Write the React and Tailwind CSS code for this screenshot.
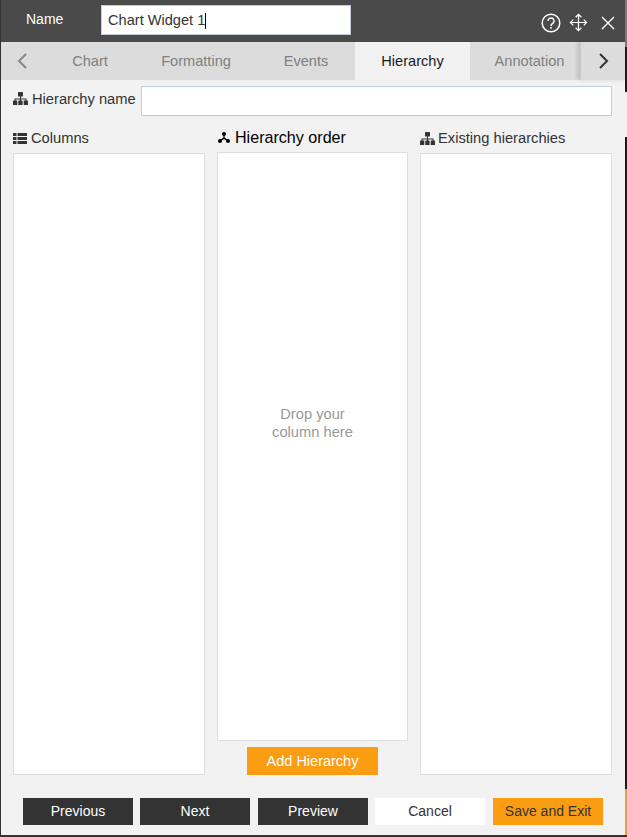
const font = "font-['Liberation_Sans',Arial,sans-serif]";

function HierarchyIcon({ className }) {
  return (
    <svg viewBox="0 0 15 13" className={className} fill="currentColor">
      <rect x="5" y="0" width="5" height="4.500" rx="0.6" />
      <path d="M7 4h1v2.500h5.500V9h-1V7.500H8V9H7V7.500H2.500V9h-1V6.500H7z" />
      <rect x="0" y="8.500" width="4.300" height="4.500" rx="0.6" />
      <rect x="5.300" y="8.500" width="4.300" height="4.500" rx="0.6" />
      <rect x="10.700" y="8.500" width="4.300" height="4.500" rx="0.6" />
    </svg>
  );
}

function ColumnsIcon({ className }) {
  return (
    <svg viewBox="0 0 14 11" className={className} fill="currentColor">
      <rect x="0" y="0" width="3.500" height="3" />
      <rect x="4.500" y="0" width="9.500" height="3" />
      <rect x="0" y="4" width="3.500" height="3" />
      <rect x="4.500" y="4" width="9.500" height="3" />
      <rect x="0" y="8" width="3.500" height="3" />
      <rect x="4.500" y="8" width="9.500" height="3" />
    </svg>
  );
}

function OrderIcon({ className }) {
  return (
    <svg viewBox="0 0 12 11" className={className} fill="currentColor">
      <circle cx="6" cy="2" r="2" />
      <circle cx="2" cy="9" r="2" />
      <circle cx="10" cy="9" r="2" />
      <path d="M5.400 3h1.200v2.600l3.600 3-.8.900L6 7 2.600 9.500l-.8-.9 3.600-3z" />
    </svg>
  );
}

function TabButton({ label, active, className }) {
  return (
    <div className={`${className} flex items-center justify-center h-full pt-px text-[14.6px] ${active ? "bg-[#f2f2f2] text-[#1a1a1a]" : "text-[#808080]"}`}>
      {label}
    </div>
  );
}

function FooterButton({ label, tone, width }) {
  const tones = {
    dark: "bg-[#333333] text-white",
    light: "bg-white text-[#333333]",
    orange: "bg-[#fb9d13] text-[#333333]",
  };
  return <button className={`${width} h-[27px] pb-[2px] text-sm ${tones[tone]}`}>{label}</button>;
}

export default function App() {
  return (
    <div className={`${font} w-[627px] h-[837px] flex flex-col bg-[#f2f2f2] border-l border-b-2 border-[#333333] relative overflow-hidden`}>
      <div className="h-[42px] shrink-0 bg-[#4a4a4a] flex items-center">
        <span className="w-[100px] pl-[25px] text-sm text-white -mt-[4px]">Name</span>
        <div className="w-[250px] h-[30px] -mt-[2px] pt-px bg-white border border-[#c3cbdc] flex items-center pl-[6px] text-[14.6px] text-[#333333]">
          Chart Widget 1<span className="w-px h-[16px] bg-black" />
        </div>
        <div className="ml-auto flex items-center text-white mt-[3px]">
          <svg viewBox="0 0 20 20" className="w-[20px] h-[20px] mr-[8px]" fill="none" stroke="currentColor" strokeWidth="1.5">
            <circle cx="10" cy="10" r="8.800" />
            <path d="M7 8a3 3 0 1 1 4.700 2.400c-1.100.8-1.700 1.300-1.700 2.600" />
            <path d="M10 14v1.800" />
          </svg>
          <svg viewBox="0 0 20 20" className="w-[19px] h-[19px] mr-[13px]" fill="none" stroke="currentColor" strokeWidth="1.300">
            <path d="M10 1.500v17M1.500 10h17" />
            <path d="M7 4.500 10 1.500l3 3M7 15.500l3 3 3-3M4.500 7 1.500 10l3 3M15.500 7l3 3-3 3" />
          </svg>
          <svg viewBox="0 0 14 14" className="w-[14px] h-[14px] mr-[12px]" fill="none" stroke="currentColor" strokeWidth="1.400">
            <path d="M1 1l12 12M13 1 1 13" />
          </svg>
        </div>
      </div>

      <div className="h-[38px] shrink-0 bg-[#dcdcdc] flex items-center">
        <div className="w-[44px] h-full flex items-center justify-center text-[#888888]">
          <svg viewBox="0 0 12 18" className="w-[12px] h-[18px] -ml-[2px]" fill="none" stroke="currentColor" strokeWidth="2">
            <path d="M10 2 3 9l7 7" />
          </svg>
        </div>
        <TabButton label="Chart" className="w-[90px]" />
        <TabButton label="Formatting" className="w-[122px]" />
        <TabButton label="Events" className="w-[98px]" />
        <TabButton label="Hierarchy" className="w-[115px]" active />
        <TabButton label="Annotation" className="w-[110px] pl-[9px]" />
        <div className="w-[47px] h-full flex items-center justify-center text-[#333333] border-l border-[#c8c8c8] shadow-[-3px_0_4px_rgba(0,0,0,0.12)]">
          <svg viewBox="0 0 12 18" className="w-[12px] h-[18px]" fill="none" stroke="currentColor" strokeWidth="2">
            <path d="M2 2l7 7-7 7" />
          </svg>
        </div>
      </div>

      <div className="flex-1 flex flex-col pl-[12px] pr-[14px] min-h-0">
        <div className="flex items-center mt-[6px] h-[30px] text-[#333333] text-[14.7px]">
          <div className="w-[128px] flex items-center mb-[4px]">
            <HierarchyIcon className="w-[15px] h-[13px] mr-[4px] shrink-0" />
            <span>Hierarchy name</span>
          </div>
          <div className="w-[471px] h-[30px] bg-white border border-[#c3cbdc]" />
        </div>

        <div className="flex-1 grid grid-cols-[192px_191px_192px] gap-x-[12px] mt-[10px] min-h-0">
          <div className="flex flex-col min-h-0">
            <div className="h-[27px] pb-[3px] flex items-center text-[14.7px] text-[#333333]">
              <ColumnsIcon className="w-[14px] h-[11px] mr-[4px]" />
              Columns
            </div>
            <div className="h-[622px] bg-white border border-[#dedede]" />
          </div>
          <div className="flex flex-col min-h-0">
            <div className="h-[26px] pb-[3px] flex items-center text-[16.1px] text-black">
              <OrderIcon className="w-[12px] h-[11px] ml-px mr-[5px]" />
              Hierarchy order
            </div>
            <div className="h-[589px] pb-[48px] bg-white border border-[#dedede] flex items-center justify-center text-center text-[14.7px] leading-[18px] text-[#999999]">
              Drop your<br />column here
            </div>
            <button className="self-center mt-[6px] pt-[2px] w-[131px] h-[28px] bg-[#fb9d13] text-white text-[14.5px]">Add Hierarchy</button>
          </div>
          <div className="flex flex-col min-h-0">
            <div className="h-[27px] pb-[3px] flex items-center text-[14.7px] text-[#333333]">
              <HierarchyIcon className="w-[15px] h-[13px] mr-[3px]" />
              Existing hierarchies
            </div>
            <div className="h-[622px] bg-white border border-[#dedede]" />
          </div>
        </div>

        <div className="flex mb-[10px] ml-[10px]">
          <FooterButton label="Previous" tone="dark" width="w-[110px]" />
          <div className="w-[7px]" />
          <FooterButton label="Next" tone="dark" width="w-[110px]" />
          <div className="w-[8px]" />
          <FooterButton label="Preview" tone="dark" width="w-[110px]" />
          <div className="w-[7px]" />
          <FooterButton label="Cancel" tone="light" width="w-[110px]" />
          <div className="w-[8px]" />
          <FooterButton label="Save and Exit" tone="orange" width="w-[110px]" />
        </div>
      </div>

      <div className="absolute right-0 top-0 w-[2px] h-[47px] bg-[#7a7a7a]" />
      <div className="absolute right-0 top-[47px] w-[2px] h-[45px] bg-[#1a1a1a]" />
      <div className="absolute right-0 top-[137px] w-[2px] h-[652px] bg-[#1a1a1a]" />
      <div className="absolute right-0 top-[789px] w-[2px] h-[46px] bg-[#fb9d13]" />
    </div>
  );
}
